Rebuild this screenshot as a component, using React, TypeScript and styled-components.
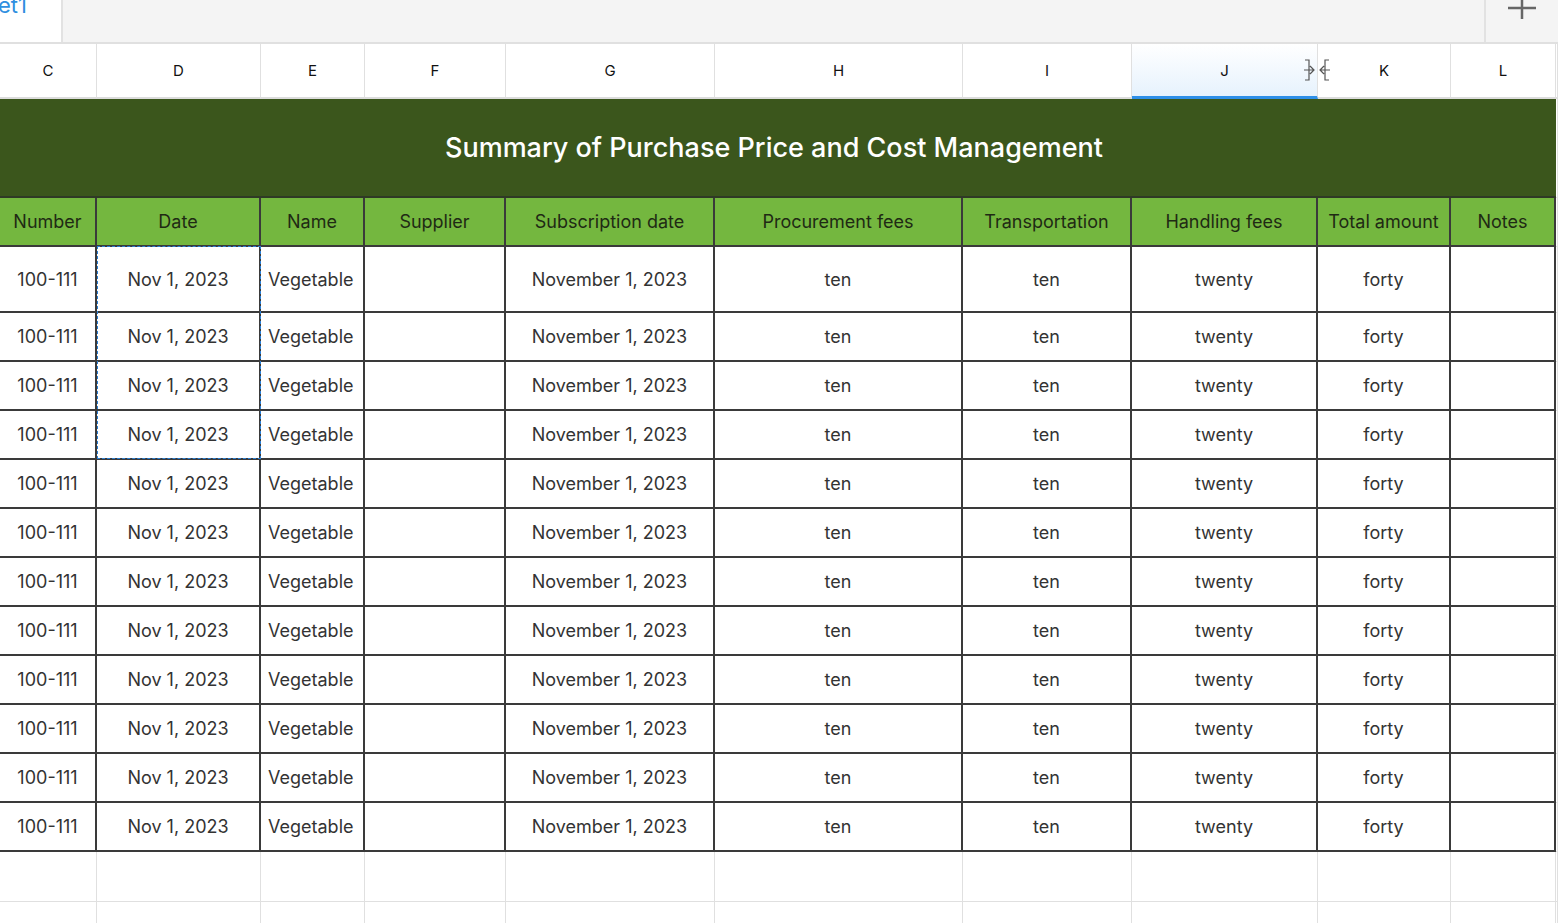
import React from "react";
import styled, { createGlobalStyle } from "styled-components";

const Global = createGlobalStyle`
  html, body { margin: 0; padding: 0; background: #fff; overflow: hidden; }
  body { font-family: Inter, "Noto Sans", sans-serif; color: #222; }
`;

const widths = [97, 164, 104, 141, 209, 248, 169, 186, 133, 105];
const tpl = widths.map((w) => w + "px").join(" ") + " 1fr";

const Page = styled.div`
  width: 1558px;
  height: 923px;
  position: relative;
  overflow: hidden;
`;

const TabBar = styled.div`
  height: 42px;
  display: flex;
  background: #f4f4f4;
  border-bottom: 2px solid #e0e0e0;
`;

const Tab = styled.div`
  width: 63px;
  background: #fff;
  border-right: 2px solid #e2e2e2;
  color: #2f8fe0;
  font-size: 22px;
  line-height: 22px;
  box-sizing: border-box;
  overflow: hidden;
  position: relative;
`;

const TabLabel = styled.span`
  position: absolute;
  left: -2px;
  top: -6px;
`;

const Spacer = styled.div`
  flex: 1;
`;

const AddBtn = styled.div`
  width: 72px;
  border-left: 2px solid #e2e2e2;
  display: flex;
  justify-content: center;
  align-items: flex-start;
`;

const Row = styled.div<{ $h: number }>`
  display: grid;
  grid-template-columns: ${tpl};
  height: ${(p) => p.$h}px;
`;

const ColHead = styled.div<{ $active?: boolean }>`
  display: flex;
  align-items: center;
  justify-content: center;
  font-size: 15px;
  color: #111;
  border-right: 1px solid #e0e0e0;
  border-bottom: 2px solid #dcdcdc;
  position: relative;
  z-index: ${(p) => (p.$active ? 2 : 1)};
  background: ${(p) => (p.$active ? "linear-gradient(#ffffff, #e6f2fd)" : "#fff")};
  ${(p) => (p.$active ? "border-bottom: 3px solid #2d8fe8;" : "")}
`;

const Title = styled.div`
  grid-column: 1 / 11;
  background: #3b561c;
  color: #fff;
  font-size: 27px;
  font-weight: 500;
  display: flex;
  align-items: center;
  justify-content: center;
  padding-right: 8px;
  border-bottom: 2px solid #2f3a25;
`;

const HeadCell = styled.div`
  background: #74b73f;
  color: #1f2a14;
  font-size: 18px;
  display: flex;
  align-items: center;
  justify-content: center;
  border-right: 2px solid #3a3a3a;
  border-bottom: 2px solid #3a3a3a;
  white-space: nowrap;
  overflow: hidden;
`;

const Cell = styled.div<{ $left?: boolean }>`
  font-size: 18px;
  color: #333;
  display: flex;
  align-items: center;
  justify-content: ${(p) => (p.$left ? "flex-start" : "center")};
  padding-left: ${(p) => (p.$left ? "7px" : "0")};
  border-right: 2px solid #3a3a3a;
  border-bottom: 2px solid #3a3a3a;
  white-space: nowrap;
`;

const Empty = styled.div`
  border-right: 1px solid #e0e0e0;
  border-bottom: 1px solid #e0e0e0;
`;

const Selection = styled.div`
  position: absolute;
  left: 97px;
  top: 246px;
  width: 164px;
  height: 213px;
  border: 1.5px dashed #2b7fd4;
  box-sizing: border-box;
  pointer-events: none;
`;

const Resize = styled.svg`
  position: absolute;
  right: -13px;
  top: 50%;
  transform: translateY(-50%);
`;

const letters = ["C", "D", "E", "F", "G", "H", "I", "J", "K", "L"];
const heads = ["Number", "Date", "Name", "Supplier", "Subscription date", "Procurement fees", "Transportation", "Handling fees", "Total amount", "Notes"];
const data = ["100-111", "Nov 1, 2023", "Vegetable", "", "November 1, 2023", "ten", "ten", "twenty", "forty", ""];

export default function App() {
  return (
    <Page>
      <Global />
      <TabBar>
        <Tab>
          <TabLabel>et1</TabLabel>
        </Tab>
        <Spacer />
        <AddBtn>
          <svg width="34" height="22" viewBox="0 0 34 22">
            <path d="M17 0 V19 M3 8 H31" stroke="#666" strokeWidth="2.5" fill="none" />
          </svg>
        </AddBtn>
      </TabBar>
      <Row $h={55}>
        {letters.map((l) => (
          <ColHead key={l} $active={l === "J"}>
            {l}
            {l === "J" && (
              <Resize width="26" height="24" viewBox="0 0 26 24">
                <path d="M1 2 H5 V22 H1 M25 2 H21 V22 H25 M0 12 H10 M6 8 L10 12 L6 16 M26 12 H16 M20 8 L16 12 L20 16" stroke="#555" strokeWidth="1.2" fill="none" />
              </Resize>
            )}
          </ColHead>
        ))}
        <ColHead />
      </Row>
      <Row $h={99}>
        <Title>Summary of Purchase Price and Cost Management</Title>
        <Empty />
      </Row>
      <Row $h={49}>
        {heads.map((h) => (
          <HeadCell key={h}>{h}</HeadCell>
        ))}
        <Empty />
      </Row>
      {Array.from({ length: 12 }).map((_, r) => (
        <Row key={r} $h={r === 0 ? 66 : 49}>
          {data.map((d, i) => (
            <Cell key={i} $left={i === 2}>{d}</Cell>
          ))}
          <Empty />
        </Row>
      ))}
      {[0, 1].map((r) => (
        <Row key={"e" + r} $h={50}>
          {letters.map((l) => (
            <Empty key={l} />
          ))}
          <Empty />
        </Row>
      ))}
      <Selection />
    </Page>
  );
}
